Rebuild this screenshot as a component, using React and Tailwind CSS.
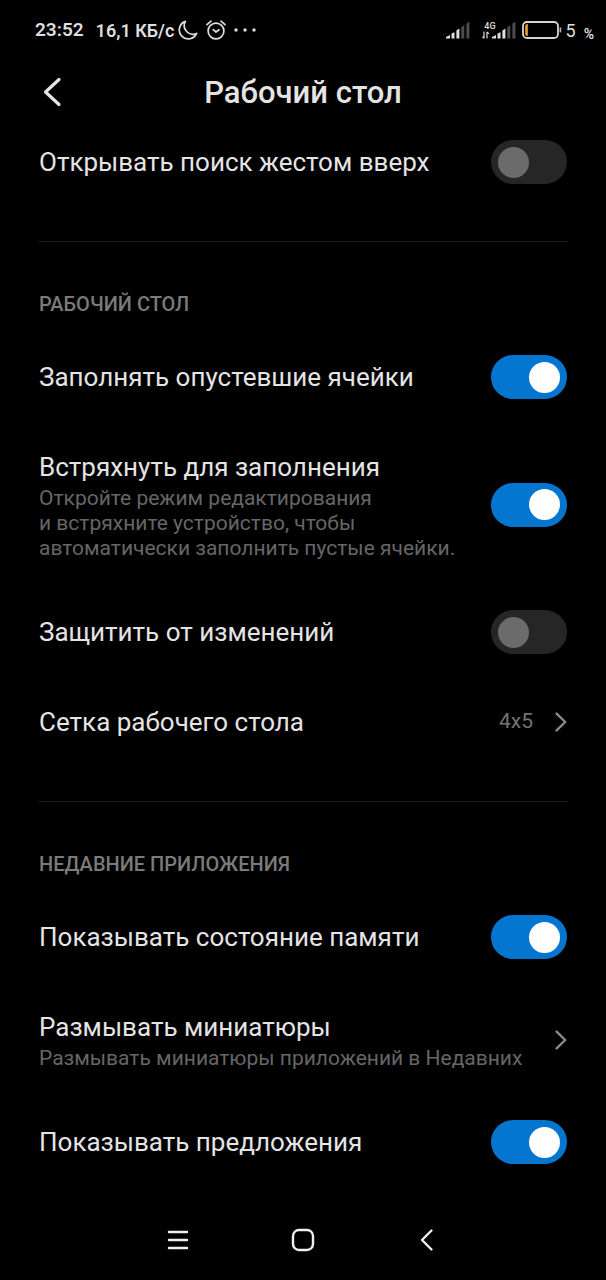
import { useState } from 'react';
import clsx from 'clsx';

const MoonIcon = () => (
  <svg className="h-5 w-5" viewBox="0 0 20 20" fill="none" stroke="currentColor" strokeWidth="1.7" strokeLinejoin="round">
    <path d="M7.4 1.4A9 9 0 1 0 18.6 13.4 8.6 8.6 0 0 1 7.4 1.4Z" />
  </svg>
);

const AlarmIcon = () => (
  <svg className="h-5 w-5" viewBox="0 0 20 20" fill="none" stroke="currentColor" strokeWidth="1.7" strokeLinecap="round" strokeLinejoin="round">
    <circle cx="10" cy="11" r="7.9" />
    <path d="M1 4.6 5 1.2M19 4.6 15 1.2M7.2 9.6 10 12l3-2.2" />
  </svg>
);

const SignalBars = () => (
  <svg className="h-[18px] w-6" viewBox="0 0 24 18" fill="currentColor">
    <path d="M0 17.5V16l4-2v3.5ZM5.5 12.6l3-1.4v6.3h-3ZM10.4 9.4l3-1.8v9.9h-3Z" />
    <path d="m15.3 6.2 3-2v13.3h-3ZM20.4 2.8 23.4.6v16.9h-3Z" opacity="0.35" />
  </svg>
);

const DataArrows = () => (
  <svg className="h-2 w-2" viewBox="0 0 8 8" fill="none" stroke="currentColor" strokeWidth="1.2">
    <path d="M2 .5v6.7M.4 5.6 2 7.3M5 7.5V.9M6.9 2.8 5 .9" />
  </svg>
);

const BatteryIcon = () => (
  <svg className="h-[18px] w-10" viewBox="0 0 40 18" fill="none">
    <rect x="1" y="1" width="35" height="16" rx="4" stroke="#d4d4d4" strokeWidth="1.8" />
    <path d="M3.2 4.8Q3.4 3.2 5.8 3v12Q3.4 14.8 3.2 13.2Z" fill="#eda338" />
    <path d="M37.6 6.4h1.6v5h-1.6z" fill="#b5b5b5" />
  </svg>
);

const Chevron = () => (
  <svg className="h-5 w-3 shrink-0" viewBox="0 0 12 20" fill="none" stroke="#8a8a8a" strokeWidth="2.4" strokeLinecap="round" strokeLinejoin="round">
    <path d="m1.6 1.6 8.6 8.4-8.6 8.4" />
  </svg>
);

const StatusBar = () => (
  <div className="flex h-[60px] items-center justify-between pr-3 pl-[35px] text-[#dedede]">
    <div className="flex items-center font-semibold">
      <span className="text-[19px]">23:52</span>
      <span className="ml-3 text-[18px]">16,1 КБ/с</span>
      <span className="ml-1"><MoonIcon /></span>
      <span className="ml-2"><AlarmIcon /></span>
      <svg className="ml-2 h-1 w-[22px]" viewBox="0 0 22 4" fill="currentColor">
        <circle cx="2" cy="2" r="1.7" />
        <circle cx="11" cy="2" r="1.7" />
        <circle cx="20" cy="2" r="1.7" />
      </svg>
    </div>
    <div className="flex items-center">
      <SignalBars />
      <div className="ml-3 flex flex-col">
        <span className="pl-0.5 text-[9px] leading-[10px] font-medium">4G</span>
        <DataArrows />
      </div>
      <div className="-ml-1"><SignalBars /></div>
      <div className="ml-1.5"><BatteryIcon /></div>
      <span className="ml-1 text-[18px]">5</span>
      <span className="ml-2 pt-2 text-[14px] font-semibold">%</span>
    </div>
  </div>
);

const Label = ({ title, note }) => (
  <span className="min-w-0">
    <span className="block text-[26px] leading-[38px] text-[#e4e4e4]">{title}</span>
    {note && <span className="block text-[21px] leading-[25px] whitespace-pre-line text-[#666]">{note}</span>}
  </span>
);

const SwitchRow = ({ title, note, on = false }) => {
  const [checked, setChecked] = useState(on);

  return (
    <label className="flex items-center justify-between py-[26px]">
      <Label title={title} note={note} />
      <span className={clsx('-my-1 flex h-11 w-[76px] shrink-0 rounded-full', checked ? 'bg-[#0476d0]' : 'bg-[#262626]')}>
        <input
          type="checkbox"
          role="switch"
          checked={checked}
          onChange={(e) => setChecked(e.target.checked)}
          className="flex w-full appearance-none items-center px-[7px] before:size-[31px] before:rounded-full before:bg-[#6b6b6b] checked:justify-end checked:before:bg-white"
        />
      </span>
    </label>
  );
};

const LinkRow = ({ title, note, value }) => (
  <a href="#" className="flex items-center justify-between py-[26px]">
    <Label title={title} note={note} />
    <span className="flex items-center gap-[22px] text-[21px] text-[#747474]">
      {value}
      <Chevron />
    </span>
  </a>
);

const Section = ({ title, children }) => (
  <section className="mt-[34px] border-t border-[#1c1c1c]">
    <h2 className="pt-[50px] pb-4 text-[20px] leading-6 font-medium text-[#7a7a7a] uppercase">{title}</h2>
    {children}
  </section>
);

export default function App() {
  return (
    <div className="flex min-h-screen flex-col bg-black font-['Roboto',sans-serif]">
      <StatusBar />

      <header className="grid h-[57px] grid-cols-[1fr_auto_1fr] items-center px-[39px] pt-2">
        <button type="button" aria-label="Назад" className="justify-self-start text-[#e4e4e4]">
          <svg className="h-8 w-6" viewBox="0 0 24 32" fill="none" stroke="currentColor" strokeWidth="3.2" strokeLinecap="round" strokeLinejoin="round">
            <path d="M20 2.5 6.5 15 20 27.5" />
          </svg>
        </button>
        <h1 className="text-[31px] leading-9 font-medium text-[#e4e4e4]">Рабочий стол</h1>
      </header>

      <main className="flex-1 px-[39px]">
        <SwitchRow title="Открывать поиск жестом вверх" />

        <Section title="Рабочий стол">
          <SwitchRow title="Заполнять опустевшие ячейки" on />
          <SwitchRow
            title="Встряхнуть для заполнения"
            note={'Откройте режим редактирования\nи встряхните устройство, чтобы\nавтоматически заполнить пустые ячейки.'}
            on
          />
          <SwitchRow title="Защитить от изменений" />
          <LinkRow title="Сетка рабочего стола" value="4x5" />
        </Section>

        <Section title="Недавние приложения">
          <SwitchRow title="Показывать состояние памяти" on />
          <LinkRow title="Размывать миниатюры" note="Размывать миниатюры приложений в Недавних" />
          <SwitchRow title="Показывать предложения" on />
        </Section>
      </main>

      <nav className="flex h-[80px] items-center justify-center gap-[101px] text-[#f0f0f0]">
        <button type="button" aria-label="Недавние">
          <svg className="h-6 w-6" viewBox="0 0 24 24" stroke="currentColor" strokeWidth="2.4" strokeLinecap="round">
            <path d="M3 4h18M3 12h18M3 20h18" />
          </svg>
        </button>
        <button type="button" aria-label="Домой">
          <svg className="h-6 w-6" viewBox="0 0 24 24" fill="none" stroke="currentColor" strokeWidth="2.4">
            <rect x="2" y="2" width="20" height="20" rx="6" />
          </svg>
        </button>
        <button type="button" aria-label="Назад">
          <svg className="h-6 w-6" viewBox="0 0 24 24" fill="none" stroke="currentColor" strokeWidth="2.4" strokeLinecap="round" strokeLinejoin="round">
            <path d="M15.5 2.5 6 12l9.5 9.5" />
          </svg>
        </button>
      </nav>
    </div>
  );
}
